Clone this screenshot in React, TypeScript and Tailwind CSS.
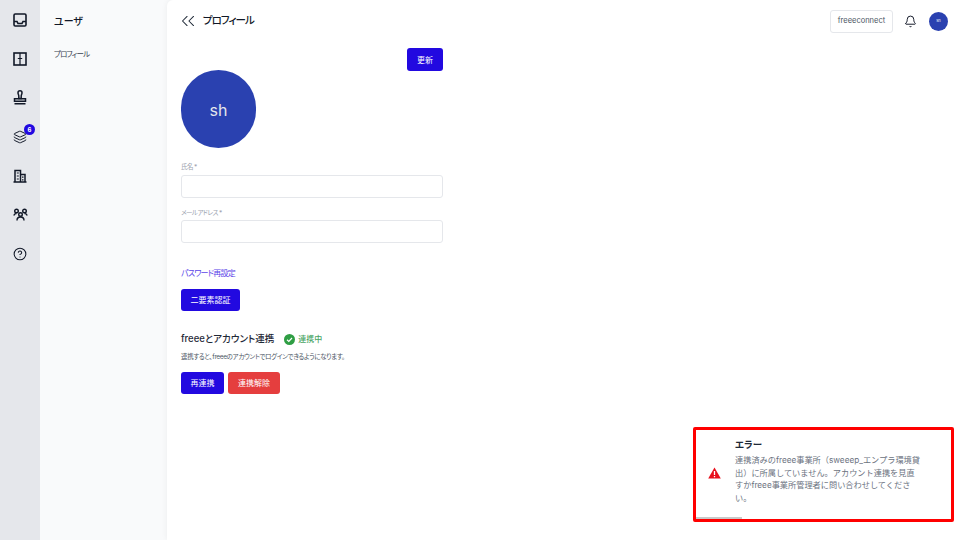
import { Bell, ChevronsLeft, CircleHelp, Layers } from 'lucide-react';

const jp = '[font-family:Inter,"Noto_Sans_CJK_JP",sans-serif] [font-feature-settings:"palt"]';

function RailIcon({ children, badge }: { children: React.ReactNode; badge?: string }) {
  return (
    <div className="relative flex h-[39px] w-10 items-center justify-center text-[#111827]">
      {children}
      {badge && (
        <span className="absolute top-[7px] left-[24px] flex h-[11px] w-[11px] items-center justify-center rounded-full bg-[#2209e0] text-[6px] font-bold text-white">
          {badge}
        </span>
      )}
    </div>
  );
}

function Rail() {
  return (
    <nav className="flex w-10 shrink-0 flex-col bg-[#e5e7eb]">
      <RailIcon>
        <svg width="14" height="14" viewBox="0 0 14 14" fill="none" stroke="currentColor" strokeWidth="1.600">
          <rect x="1" y="1" width="12" height="12" rx="1.200" />
          <path d="M1 8.500h3l1 2h4l1-2h3" />
        </svg>
      </RailIcon>
      <RailIcon>
        <svg width="14" height="14" viewBox="0 0 14 14" fill="none" stroke="currentColor" strokeWidth="1.600">
          <rect x="1" y="1" width="12" height="12" />
          <path d="M7 1v12M4.800 6.500h4.400" strokeWidth="1.200" />
        </svg>
      </RailIcon>
      <RailIcon>
        <svg width="14" height="15" viewBox="0 0 14 15" fill="none" stroke="currentColor" strokeWidth="1.500">
          <path d="M5 2.800a2 2 0 0 1 4 0c0 1.500-.8 2-.8 3.400V8.500H5.800V6.200C5.800 4.800 5 4.300 5 2.800Z" />
          <path d="M1.500 8.800h11v2.400h-11zM1.500 13.800h11" />
        </svg>
      </RailIcon>
      <RailIcon badge="6">
        <Layers size={14} strokeWidth={1.700} />
      </RailIcon>
      <RailIcon>
        <svg width="14" height="14" viewBox="0 0 14 14" fill="none" stroke="currentColor" strokeWidth="1.500">
          <path d="M2 13V1.500h5.500V13M7.500 5.500h4.500V13M0.500 13h13" />
          <path d="M3.800 4h2M3.800 7h2M3.800 10h2M9 8.200h1.500M9 10.800h1.500" strokeWidth="1.200" />
        </svg>
      </RailIcon>
      <RailIcon>
        <svg width="15" height="13" viewBox="0 0 15 13" fill="none" stroke="currentColor" strokeWidth="1.400">
          <circle cx="3.500" cy="3" r="1.800" />
          <circle cx="11.500" cy="3" r="1.800" />
          <circle cx="7.500" cy="6.500" r="1.800" />
          <path d="M0.800 7.500c.4-1.400 1.300-2 2.700-2M14.200 7.500c-.4-1.400-1.300-2-2.700-2M4 12.500c0-2.300 1.300-3.500 3.500-3.500s3.500 1.200 3.500 3.500" />
        </svg>
      </RailIcon>
      <RailIcon>
        <CircleHelp size={14} strokeWidth={1.800} />
      </RailIcon>
    </nav>
  );
}

function Field({ label }: { label: string }) {
  return (
    <div className="flex flex-col">
      <label className="h-[13.500px] text-[6.500px] leading-[13.500px] tracking-[-0.6px] text-[#9ca3af]">{label}</label>
      <input className="h-[23px] rounded-[3px] border border-[#e5e7eb] bg-white" />
    </div>
  );
}

export default function App() {
  return (
    <div className={`relative flex h-[540px] w-[960px] overflow-hidden bg-[#f9fafb] ${jp}`}>
      <Rail />

      <aside className="w-[127px] shrink-0 bg-[#f9fafb] px-[14px] pt-[14px]">
        <h2 className="text-[10px] leading-[14px] font-medium text-[#111827]">ユーザ</h2>
        <p className="mt-[21px] text-[7.500px] leading-[12px] tracking-[-0.9px] text-[#374151]">プロフィール</p>
      </aside>

      <main className="flex-1 rounded-tl-[6px] bg-white shadow-[0_0_6px_rgba(0,0,0,0.06)]">
        <header className="flex h-[42px] items-center pr-[12px] pl-[10px]">
          <ChevronsLeft size={22} strokeWidth={1.100} className="text-[#1f2937]" />
          <h1 className="ml-[4px] text-[10.500px] font-medium tracking-[-1px] text-[#111827]">プロフィール</h1>
          <div className="ml-auto flex items-center">
            <button className="h-[23px] w-[63px] rounded-[3px] border border-[#e5e7eb] text-[7.500px] text-[#4b5563]">
              freeeconnect
            </button>
            <Bell size={13} strokeWidth={1.800} className="mr-[12px] ml-[11px] text-[#111827]" />
            <div className="flex h-[19px] w-[19px] items-center justify-center rounded-full bg-[#2a41b0] text-[4px] text-white">
              sh
            </div>
          </div>
        </header>

        <div className="w-[276px] pl-[14px]">
          <div className="flex justify-end pt-[6px]">
            <button className="h-[23px] w-9 rounded-[3px] bg-[#2209e0] text-[8px] text-white">更新</button>
          </div>
          <div className="mt-[-1px] flex h-[78px] w-[75px] items-center justify-center rounded-full bg-[#2a41b0] pt-[2px] text-[16px] text-[#e5e7eb]">
            sh
          </div>

          <div className="mt-[13px] flex flex-col gap-[9px]">
            <Field label="氏名 *" />
            <Field label="メールアドレス *" />
          </div>

          <a className="mt-[24px] block text-[8px] leading-[12px] tracking-[-0.75px] text-[#5b46e8]">パスワード再設定</a>
          <button className="mt-[10px] block h-[22px] w-[59px] rounded-[3px] bg-[#2209e0] text-[8px] text-white">
            二要素認証
          </button>

          <div className="mt-[20px] flex h-[16px] items-center">
            <h3 className="text-[9.500px] font-medium text-[#1f2937]">freeeとアカウント連携</h3>
            <svg className="ml-[10px]" width="11" height="11" viewBox="0 0 11 11">
              <circle cx="5.500" cy="5.500" r="5.500" fill="#2f9e44" />
              <path d="M3 5.700l1.800 1.700L8 4" fill="none" stroke="#fff" strokeWidth="1.200" />
            </svg>
            <span className="ml-[3px] text-[8px] font-medium text-[#4aa564]">連携中</span>
          </div>
          <p className="mt-[5px] text-[6.500px] leading-[10px] tracking-[-0.35px] whitespace-nowrap text-[#4b5563]">
            連携すると、freeeのアカウントでログインできるようになります。
          </p>
          <div className="mt-[10px] flex gap-1">
            <button className="h-[22px] w-[43px] rounded-[3px] bg-[#2209e0] text-[8px] text-white">再連携</button>
            <button className="h-[22px] w-[52px] rounded-[3px] bg-[#e53e3e] text-[8px] text-white">連携解除</button>
          </div>
        </div>
      </main>

      {/* error toast, with the red annotation box around it */}
      <div className="absolute top-[427px] left-[693px] flex h-[95px] w-[261px] items-center rounded-[2px] border-[3px] border-[#ff0000] bg-white">
        <svg className="mb-[4px] ml-[12px] shrink-0" width="13" height="12" viewBox="0 0 13 12">
          <path d="M6.500 0.500L12.800 11.500H0.200Z" fill="#e8101c" />
          <path d="M6.500 4v4M6.500 9v1.300" stroke="#fff" strokeWidth="1.300" />
        </svg>
        <div className="ml-[14px] w-[187px] self-start pt-[8px]">
          <p className="text-[9.500px] leading-[14px] font-bold text-[#1f2937]">エラー</p>
          <p className="mt-[2px] text-[8.200px] leading-[12.700px] text-[#6b7280] [font-feature-settings:normal]">
            連携済みのfreee事業所（sweeep_エンプラ環境貸出）に所属していません。アカウント連携を見直すかfreee事業所管理者に問い合わせしてください。
          </p>
        </div>
        <div className="absolute bottom-0 left-0 h-[2px] w-[46px] bg-[#c9c9c9]" />
      </div>
    </div>
  );
}
